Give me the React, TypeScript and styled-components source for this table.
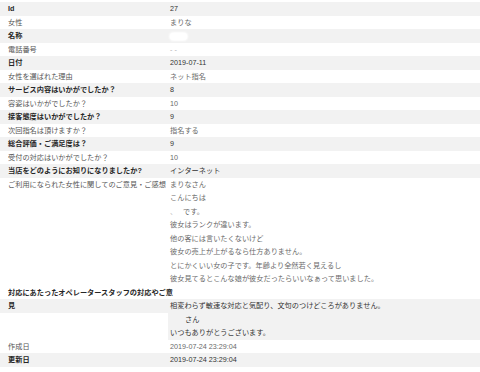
import React from "react";
import styled, { createGlobalStyle } from "styled-components";

const LINE = 13.5;
const STRIPE = "#f2f2f2";

const GlobalStyle = createGlobalStyle`
  html, body {
    margin: 0;
    padding: 0;
    background: #fff;
  }
  body {
    font-family: "Liberation Sans", "Noto Sans CJK JP", sans-serif;
  }
`;

const Sheet = styled.div`
  width: 480px;
  padding-top: 2px;
  font-size: 7.2px;
  line-height: ${LINE}px;
`;

const Row = styled.div<{ $odd: boolean; $split?: boolean }>`
  display: grid;
  grid-template-columns: 168px 1fr;
  background: ${(p) => (p.$odd && !p.$split ? STRIPE : "#fff")};
  color: ${(p) => (p.$odd ? "#333" : "#6a6a6a")};
`;

// label text may run a few px into the value column (the long bold one does)
const Label = styled.div<{ $odd: boolean; $split?: boolean }>`
  padding-left: 8px;
  margin-right: -8px;
  font-weight: ${(p) => (p.$odd ? 700 : 400)};
  color: ${(p) => (p.$odd ? "#262626" : "#555")};
  background: ${(p) =>
    p.$split
      ? `linear-gradient(to bottom, transparent ${LINE}px, ${STRIPE} ${LINE}px, ${STRIPE} ${LINE * 2}px, transparent ${LINE * 2}px)`
      : "transparent"};
`;

const Value = styled.div<{ $split?: boolean }>`
  padding-left: 2px;
  margin-top: ${(p) => (p.$split ? `${LINE}px` : "0")};
  background: ${(p) => (p.$split ? STRIPE : "transparent")};
`;

const Line = styled.div`
  white-space: nowrap;
`;

const Blank = styled.span<{ $w: number }>`
  display: inline-block;
  width: ${(p) => p.$w}px;
  color: #c4c4c4;
`;

const Blur = styled.span`
  display: inline-block;
  width: 17px;
  height: 7px;
  border-radius: 4px;
  background: #fff;
  box-shadow: 0 0 2px 1px #fff;
  vertical-align: middle;
`;

const Faint = styled.span`
  color: #b0b0b0;
`;

type Item = { label: string; lines: React.ReactNode[]; split?: boolean };

const items: Item[] = [
  { label: "Id", lines: ["27"] },
  { label: "女性", lines: ["まりな"] },
  { label: "名称", lines: [<Blur />] },
  { label: "電話番号", lines: [<Faint>- -</Faint>] },
  { label: "日付", lines: ["2019-07-11"] },
  { label: "女性を選ばれた理由", lines: ["ネット指名"] },
  { label: "サービス内容はいかがでしたか？", lines: ["8"] },
  { label: "容姿はいかがでしたか？", lines: ["10"] },
  { label: "接客態度はいかがでしたか？", lines: ["9"] },
  { label: "次回指名は頂けますか？", lines: ["指名する"] },
  { label: "総合評価・ご満足度は？", lines: ["9"] },
  { label: "受付の対応はいかがでしたか？", lines: ["10"] },
  { label: "当店をどのようにお知りになりましたか?", lines: ["インターネット"] },
  {
    label: "ご利用になられた女性に関してのご意見・ご感想",
    lines: [
      "まりなさん",
      "こんにちは",
      <>
        <Blank $w={13}>、</Blank>です。
      </>,
      "彼女はランクが違います。",
      "他の客には言いたくないけど",
      "彼女の売上が上がるなら仕方ありません。",
      "とにかくいい女の子です。年齢より全然若く見えるし",
      "彼女見てるとこんな娘が彼女だったらいいなぁって思いました。",
    ],
  },
  {
    label: "対応にあたったオペレータースタッフの対応やご意見",
    split: true,
    lines: [
      "相変わらず敏速な対応と気配り、文句のつけどころがありません。",
      <>
        <Blank $w={15} />
        さん
      </>,
      "いつもありがとうございます。",
    ],
  },
  { label: "作成日", lines: ["2019-07-24 23:29:04"] },
  { label: "更新日", lines: ["2019-07-24 23:29:04"] },
];

export default function App() {
  return (
    <>
      <GlobalStyle />
      <Sheet>
        {items.map((item, i) => {
          const odd = i % 2 === 0;
          return (
            <Row key={item.label} $odd={odd} $split={item.split}>
              <Label $odd={odd} $split={item.split}>
                {item.label}
              </Label>
              <Value $split={item.split}>
                {item.lines.map((l, j) => (
                  <Line key={j}>{l}</Line>
                ))}
              </Value>
            </Row>
          );
        })}
      </Sheet>
    </>
  );
}
